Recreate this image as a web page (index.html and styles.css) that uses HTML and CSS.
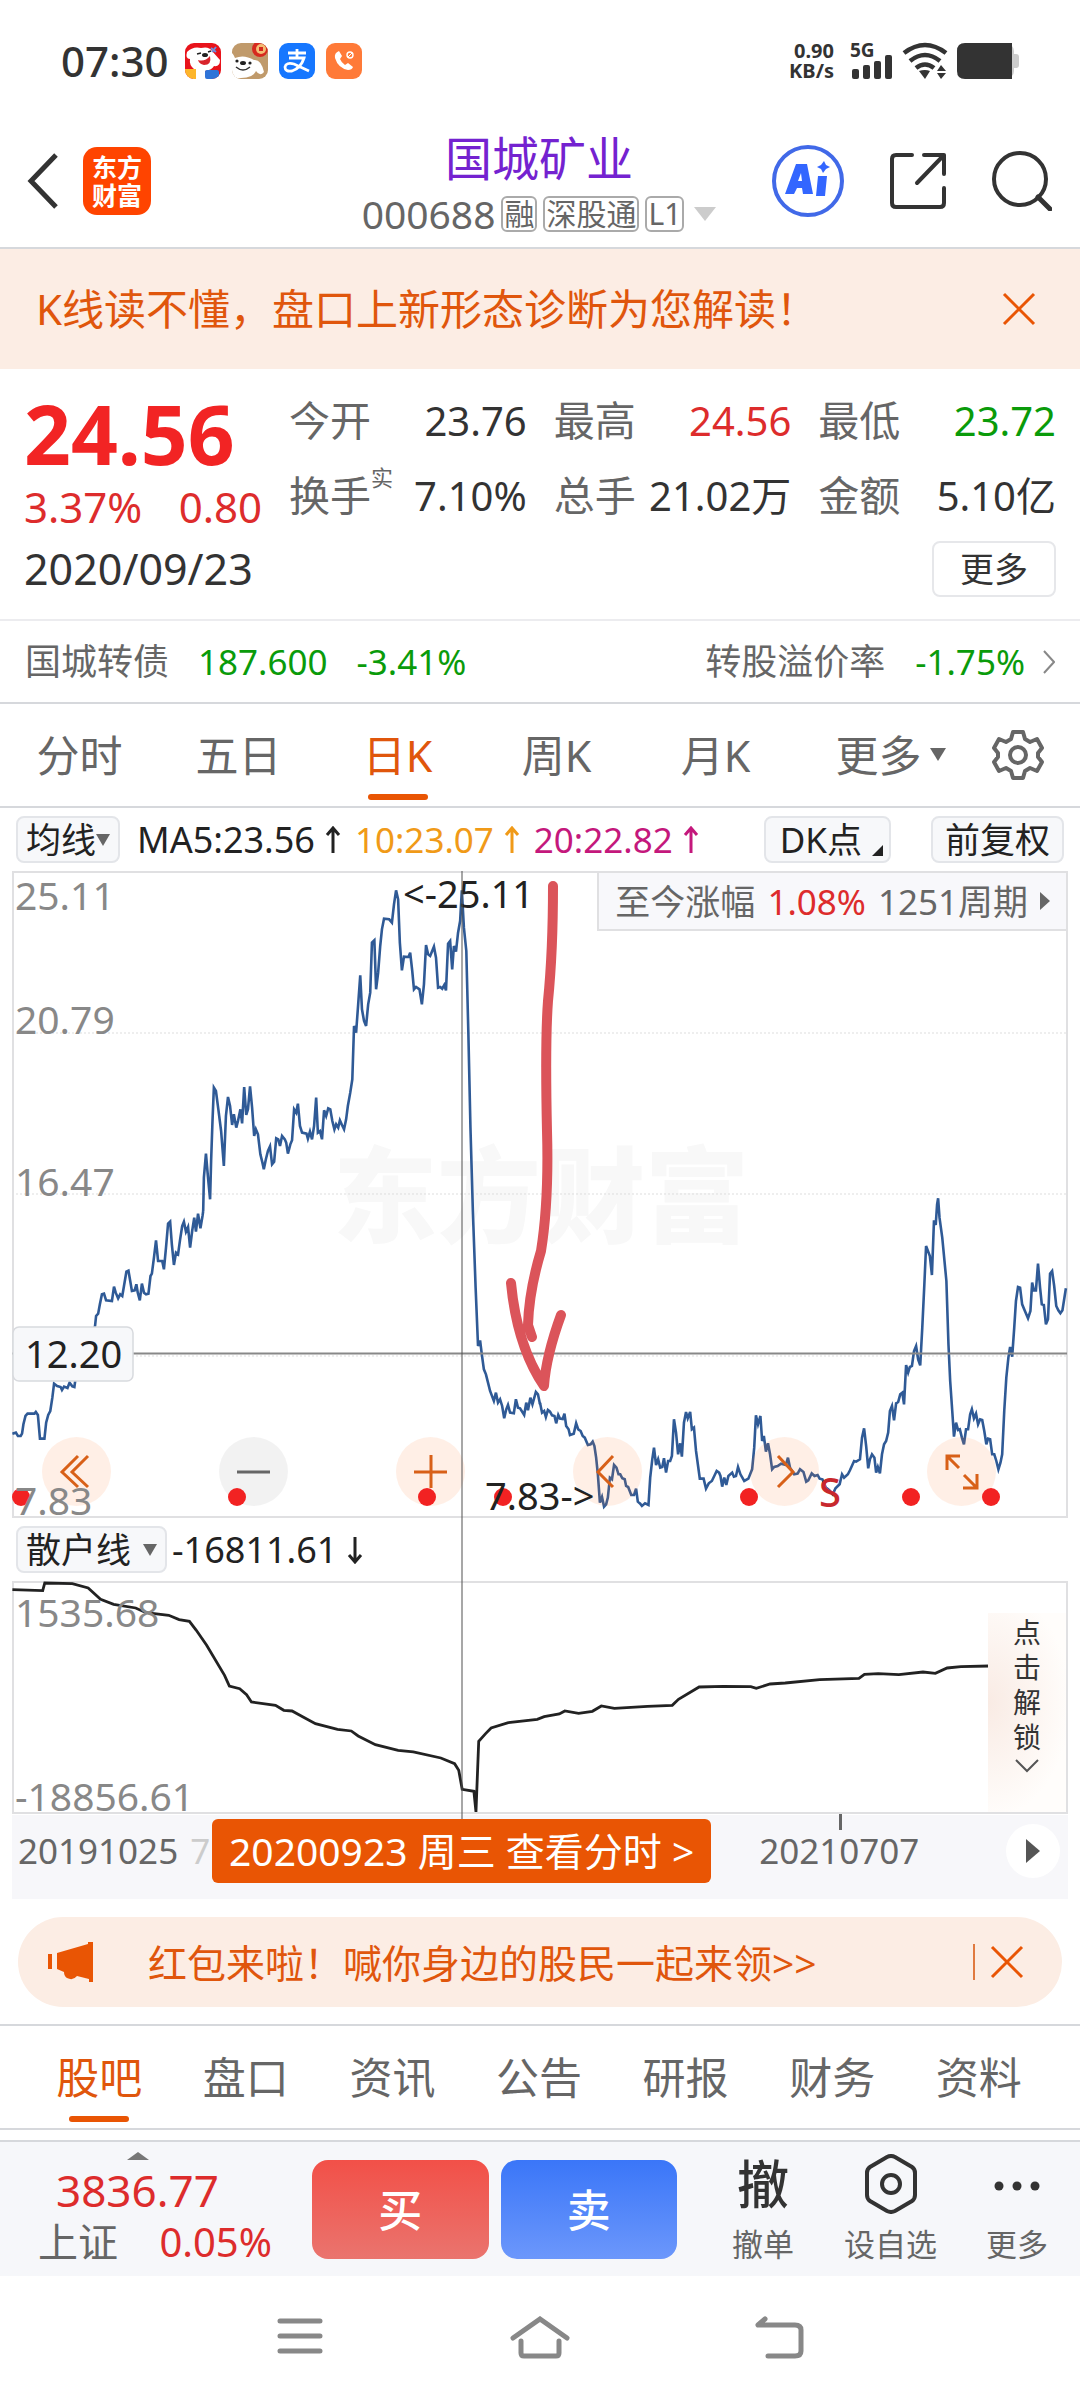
FILE: index.html
```html
<!DOCTYPE html>
<html lang="zh-CN">
<head>
<meta charset="utf-8">
<meta name="viewport" content="width=device-width, initial-scale=1">
<title>国城矿业 000688</title>
<link rel="stylesheet" href="styles.css">
</head>
<body>
<div class="statusbar">
  <span class="clock">07:30</span>
  <div class="apps">
    <svg width="36" height="36" viewBox="0 0 36 36"><defs><clipPath id="app"><rect width="36" height="36" rx="9"/></clipPath></defs><g clip-path="url(#app)"><rect width="36" height="36" fill="#e8131b"/><path d="M2 9Q8 3 16 5Q24 3 27 8L35 17Q35 24 29 23Q27 27 20 28L22 36H8L9 26Q4 22 5 16Q0 16 2 9Z" fill="#fff"/><path d="M13 17Q20 19 25 13Q27 22 19 22Q14 21 13 17Z" fill="#d8232b"/><ellipse cx="20" cy="12" rx="3" ry="2" fill="#222"/><path d="M12 11L16 10M23 9L26 8" stroke="#222" stroke-width="1.5"/><rect y="26" width="11" height="10" fill="#fdb62b"/><rect x="20" y="27" width="14" height="9" rx="2" fill="#2f74d8"/><path d="M26 5L31 9M31 4L27 9" stroke="#6d8fe0" stroke-width="2"/></g></svg>
    <svg width="36" height="36" viewBox="0 0 36 36"><g clip-path="url(#app)"><rect width="36" height="36" fill="#c09a6b"/><path d="M0 10Q2 12 3 15Q12 11 22 17Q29 16 32 29Q28 34 24 28Q21 35 9 35H0Z" fill="#fff"/><circle cx="28" cy="6" r="8" fill="#d6291e"/><circle cx="29" cy="6" r="5" fill="#f3bd74"/><rect x="27" y="4" width="4" height="4" fill="#d6291e"/><ellipse cx="11" cy="20" rx="3" ry="2" fill="#222"/><circle cx="5" cy="18" r="1.6" fill="#222"/><circle cx="18" cy="20" r="1.6" fill="#222"/><path d="M4 24Q11 30 18 24" fill="none" stroke="#333" stroke-width="1.4"/></g></svg>
    <svg width="36" height="36" viewBox="0 0 36 36"><rect width="36" height="36" rx="9" fill="#1677ff"/><path d="M9 10H27M18 6V15M10 15H25Q22 25 13 28Q6 29 6 24Q7 19 15 21L30 28" fill="none" stroke="#fff" stroke-width="2.8"/></svg>
    <svg width="36" height="36" viewBox="0 0 36 36"><rect width="36" height="36" rx="9" fill="#ff7a38"/><path d="M13 8Q8 10 9 15Q12 25 22 27Q26 27 27 24L22 20L19 22Q15 19 14 16L16 13Z" fill="#fff"/><circle cx="24" cy="12" r="3" fill="none" stroke="#fff" stroke-width="1.4"/><path d="M22 14L26 10" stroke="#fff"/></svg>
  </div>
  <div class="rate"><span>0.90</span><span>KB/s</span></div>
  <svg class="signals" width="172" height="36" viewBox="0 0 172 36">
    <text class="net" x="0" y="14">5G</text>
    <g fill="#333"><rect x="2" y="26" width="7" height="10" rx="2"/><rect x="13" y="22" width="7" height="14" rx="2"/><rect x="24" y="18" width="7" height="18" rx="2"/><rect x="35" y="12" width="7" height="24" rx="2"/>
    <path d="M69 28Q75 26 80 28L75 36ZM91 22L96 28H87ZM91 36L96 30H87Z"/></g>
    <g fill="none" stroke="#333" stroke-width="4.5"><path d="M54 10Q75-6 96 10M60 18Q75 6 90 18M66 25Q75 18 84 25"/></g>
    <rect x="150" y="1" width="14" height="34" rx="7" fill="#ccc"/><rect x="160" y="11" width="9" height="14" rx="3" fill="#ccc"/><path d="M115 0H162V36H115Q107 36 107 28V8Q107 0 115 0Z" fill="#333"/>
  </svg>
</div>

<header class="header">
  <div class="header-left">
    <button class="icon" aria-label="返回"><svg width="32" height="56" viewBox="0 0 32 56"><path d="M30 2L5 28L30 54" fill="none" stroke="#333" stroke-width="5"/></svg></button>
    <a class="logo" href="#"><span>东方</span><span>财富</span></a>
  </div>
  <div class="title">
    <h1>国城矿业</h1>
    <div class="codes"><span class="code">000688</span><span class="tag">融</span><span class="tag">深股通</span><span class="tag">L1</span><svg width="22" height="14" viewBox="0 0 22 14"><path d="M0 0H22L11 14Z" fill="#ccc"/></svg></div>
  </div>
  <div class="header-right">
    <button class="icon" aria-label="AI"><svg width="72" height="72" viewBox="0 0 72 72"><circle cx="36" cy="36" r="34" fill="none" stroke="#4169e8" stroke-width="4"/><path d="M24 19H35L41 49H31L30 43H25L22 49H13ZM29 28L26 36H30ZM46 31H55L53 51H44ZM52 16L54 20L58 22L54 24L51 28L49 24L45 22L49 20Z" fill="#3366ff" fill-rule="evenodd"/></svg></button>
    <button class="icon" aria-label="分享"><svg width="60" height="60" viewBox="0 0 60 60"><path d="M24 4H8Q4 4 4 8V52Q4 56 8 56H52Q56 56 56 52V37M36 4H56V23M56 4L29 32" fill="none" stroke="#333" stroke-width="4" stroke-linecap="round" stroke-linejoin="round"/></svg></button>
    <button class="icon" aria-label="搜索"><svg width="60" height="60" viewBox="0 0 60 60"><circle cx="28" cy="28" r="26" fill="none" stroke="#333" stroke-width="4"/><path d="M46 46L58 58" stroke="#333" stroke-width="5" stroke-linecap="round"/></svg></button>
  </div>
</header>

<div class="notice"><a href="#">K线读不懂，盘口上新形态诊断为您解读！</a><button class="icon" aria-label="关闭"><svg width="34" height="34" viewBox="0 0 34 34"><path d="M2 2L32 32M32 2L2 32" stroke="#e95504" stroke-width="3"/></svg></button></div>

<section class="quote">
  <div class="last">
    <strong>24.56</strong>
    <div class="change"><span>3.37%</span><span>0.80</span></div>
    <time>2020/09/23</time>
  </div>
  <div class="stats">
    <dl>
      <div><dt>今开</dt><dd>23.76</dd></div>
      <div><dt>最高</dt><dd class="up">24.56</dd></div>
      <div><dt>最低</dt><dd class="down">23.72</dd></div>
      <div><dt>换手<sup>实</sup></dt><dd>7.10%</dd></div>
      <div><dt>总手</dt><dd>21.02万</dd></div>
      <div><dt>金额</dt><dd>5.10亿</dd></div>
    </dl>
    <button class="more">更多</button>
  </div>
</section>

<a class="bond" href="#">
  <span>国城转债</span><span class="down">187.600</span><span class="down">-3.41%</span>
  <span class="premium">转股溢价率</span><span class="down rate-value">-1.75%</span>
  <svg width="12" height="24" viewBox="0 0 12 24"><path d="M1 1L11 12L1 23" fill="none" stroke="#888" stroke-width="2"/></svg>
</a>

<nav class="periods">
  <a href="#">分时</a><a href="#">五日</a><a class="active" href="#">日K</a><a href="#">周K</a><a href="#">月K</a>
  <a class="others" href="#">更多<svg width="16" height="14" viewBox="0 0 16 14"><path d="M0 0H16L8 13Z" fill="#666"/></svg></a>
  <button class="icon gear" aria-label="设置"><svg width="52" height="52" viewBox="0 0 52 52"><path d="M21 3H31L33 10L38 13L45 10L50 19L46 24V28L50 33L45 42L38 39L33 42L31 49H21L19 42L14 39L7 42L2 33L6 28V24L2 19L7 10L14 13L19 10Z" fill="none" stroke="#666" stroke-width="4" stroke-linejoin="round"/><circle cx="26" cy="26" r="8" fill="none" stroke="#666" stroke-width="4"/></svg></button>
</nav>

<section class="chart">
  <div class="legend">
    <button class="chip">均线<svg width="14" height="12" viewBox="0 0 14 12"><path d="M0 0H14L7 12Z" fill="#666"/></svg></button>
    <span class="ma">MA5:23.56<svg width="16" height="28" viewBox="0 0 16 28"><path d="M8 27V3M2 9L8 2L14 9"/></svg></span>
    <span class="ma ma10">10:23.07<svg width="16" height="28" viewBox="0 0 16 28"><path d="M8 27V3M2 9L8 2L14 9"/></svg></span>
    <span class="ma ma20">20:22.82<svg width="16" height="28" viewBox="0 0 16 28"><path d="M8 27V3M2 9L8 2L14 9"/></svg></span>
    <button class="chip dk">DK点<svg width="11" height="11" viewBox="0 0 11 11"><path d="M11 0V11H0Z" fill="#222"/></svg></button>
    <button class="chip adjust">前复权</button>
  </div>

  <div class="price">
    <svg class="plot" viewBox="12 870 1056 647">
      <text class="watermark" x="541" y="1234">东方财富</text>
      <g class="grid"><path d="M12 1032H1067M12 1193H1067M12 1355H1067"/></g>
      <rect class="frame" x="13" y="871" width="1054" height="645"/>
      <g class="series">
        <g transform="translate(0 860) scale(.3444 .3333)">
          <path d="M590 1050L592 950L598 878L604 950L610 1015L613 900L617 780L621 680L627 690L634 745L642 810L650 915L656 765L662 708L668 735L674 792L679 760L686 800L691 780L698 745L703 787L709 678L715 762L720 745L726 676L732 740L738 825L743 805L749 820L756 880L762 905L766 925L772 895L778 870L784 856L790 910L796 902L802 832L808 835L813 855L819 825L827 835L831 845L836 878L843 850L848 838L854 745L860 755L865 728L871 795L877 815L890 818L894 833L900 812L906 835L912 795L918 710L923 815L929 810L935 835L941 748L947 765L953 742L959 745L965 780L971 805L976 790L982 800L987 778L993 792L999 805L1005 775L1010 735L1017 695L1023 655L1028 495L1034 515L1040 430L1046 343L1051 445L1057 480L1063 495L1069 430L1075 395L1080 245L1087 238L1092 385L1098 335L1104 255L1109 205L1115 173L1130 175L1138 185L1144 130L1150 88L1156 115L1161 245L1167 328L1173 287L1186 288L1191 275L1197 330L1202 385L1208 378L1218 385L1225 430L1231 370L1237 252L1243 280L1249 285L1260 257L1266 290L1272 380L1278 378L1284 383L1290 372L1295 388L1301 248L1307 240L1313 325L1318 255L1324 272L1330 215L1336 180L1341 88L1347 200L1354 270L1360 520L1366 800L1373 1050"/>
        </g>
        <g transform="translate(0 1210) scale(.3444 .3333)">
          <path d="M36 668L46 665L52 675L60 675L64 668L68 640L74 615L80 608L100 608L104 603L110 612L116 683L129 683L134 635L140 612L146 600L152 560L157 518L166 525L176 528L180 537L186 527L196 531L202 515L210 526L216 528L219 505L276 345L279 315L285 308L290 280L296 250L302 248L308 268L325 270L331 227L336 245L343 262L349 250L355 255L360 225L367 182L373 179L379 215L383 240L391 238L396 220L400 245L406 268L412 218L418 245L424 250L431 248L437 195L441 188L447 140L453 88L459 150L471 150L476 175L482 110L488 38L494 32L499 100L505 162L511 125L517 130L523 85L529 45L534 32L540 62L546 48L552 110L558 60L564 20L569 62L575 8L582 52L588 15L590 0"/>
          <path d="M1373 0L1381 230L1388 405L1394 388L1399 430L1405 475L1411 490L1417 515L1423 540L1434 570L1440 545L1446 575L1452 565L1458 585L1464 622L1470 595L1475 582L1481 605L1492 607L1498 565L1504 590L1510 592L1522 612L1528 575L1533 598L1540 560L1546 580L1556 543L1562 550L1568 580"/>
        </g>
        <g transform="translate(540 1210) scale(.3444 .3333)">
          <path d="M0 575L6 605L12 600L17 618L23 597L29 602L35 613L42 615L47 637L53 612L58 623L66 624L71 608L76 645L83 655L87 672L98 668L105 637L111 655L118 660L124 675L130 680L139 702L147 700L153 692L158 705L163 740L168 790L174 875L180 858L186 887L192 880L197 860L203 800L209 805L215 762L222 770L228 790L233 790L239 802L246 805L250 825L256 828L265 852L273 852L279 833L284 872L291 878L296 885L305 877L315 882L320 800L326 745L331 710L337 762L343 745L349 770L355 768L360 742L366 785L372 750L378 750L383 735L389 625L395 665L401 730L407 697L412 737L418 635L424 603L429 622L436 603L441 655L447 650L453 720L459 765L464 803L475 803L482 833L490 817L499 810L506 795L513 780L520 785L524 795L529 827L535 800L541 822L547 795L558 785L563 797L569 795L575 768L582 790L593 810L605 803L616 775L622 710L627 613L633 640L640 615L645 690L650 675L656 722L662 697L668 730L674 775L680 768L690 765L700 758L714 762L720 740L726 770L738 790L748 788L755 775L765 783L773 812L779 808L789 787L797 795L806 792L812 803L820 805L830 830L840 838L850 850L858 832L870 820L877 790L883 800L894 790L900 778L912 750L918 752L929 745L935 680L941 652L947 705L953 772L958 745L964 730L971 740L976 785L981 768L987 787L993 730L999 700L1005 690L1011 665L1016 600L1022 585L1028 628L1034 577L1040 573L1046 550L1052 545L1057 580L1063 462L1069 485L1074 468L1080 465L1086 420L1092 405L1098 445L1104 463L1110 350L1116 220L1121 105L1132 135L1138 192L1144 28L1149 42L1153 -20L1156 -38L1160 20L1168 80L1180 210L1186 400L1191 510L1197 600L1202 677L1208 635L1214 657L1219 655L1225 680L1231 700L1237 655L1243 655L1249 610L1254 595L1260 622L1266 608L1272 640L1278 625L1284 627L1290 660L1296 700L1301 683L1307 685L1313 730L1319 730L1325 750L1331 775L1337 755L1342 730L1348 600L1354 500L1360 440L1365 408L1371 437L1377 350L1382 270L1388 228L1394 230L1400 280L1408 300L1417 322L1424 300L1429 215L1434 238L1440 238L1446 158L1452 230L1457 280L1463 282L1469 340L1475 325L1481 188L1487 180L1493 225L1499 285L1505 298L1511 307L1517 298L1527 232"/>
        </g>
      </g>
      <path d="M12 1352.5H1067" stroke="#888" stroke-width="2"/>
      <rect x="13" y="1326" width="120" height="54" rx="6" fill="#f7f8fa" stroke="#d8dade" stroke-width="1.5"/>
    </svg>
    <div class="controls">
      <button class="round" aria-label="最早"><svg width="69" height="69" viewBox="0 0 69 69"><path d="M36 19L20 35L36 50M46 19L30 35L46 50"/></svg></button>
      <button class="round off" aria-label="缩小"><svg width="69" height="69" viewBox="0 0 69 69"><path d="M18 35H51"/></svg></button>
      <button class="round" aria-label="放大"><svg width="69" height="69" viewBox="0 0 69 69"><path d="M18 35H51M35 18V51"/></svg></button>
      <button class="round" aria-label="左移"><svg width="69" height="69" viewBox="0 0 69 69"><path d="M40 19L25 35L40 50"/></svg></button>
      <button class="round" aria-label="右移"><svg width="69" height="69" viewBox="0 0 69 69"><path d="M28 19L43 35L28 50"/></svg></button>
      <button class="round" aria-label="全屏"><svg width="69" height="69" viewBox="0 0 69 69"><path d="M33 19H20V33M20 19L32 31M50 37V51H36M50 51L37 38"/></svg></button>
    </div>
    <svg class="plot marks" viewBox="12 870 1056 647">
      <g fill="#f22222"><circle cx="21" cy="1496" r="9"/><circle cx="237" cy="1496" r="9"/><circle cx="427" cy="1496" r="9"/><circle cx="503" cy="1496" r="9"/><circle cx="749" cy="1496" r="9"/><circle cx="911" cy="1496" r="9"/><circle cx="991" cy="1496" r="9"/></g>
      <g class="axis"><text x="15" y="909">25.11</text><text x="15" y="1033">20.79</text><text x="15" y="1195">16.47</text><text x="15" y="1514">7.83</text></g>
      <g class="value"><text x="25" y="1367">12.20</text><text x="403" y="907">&lt;-25.11</text><text x="485" y="1509">7.83-&gt;</text></g>
      <text class="sell-mark" x="819" y="1506">S</text>
      <path class="pen" d="M553 885Q553 950 548 1000Q545 1040 547 1130Q549 1200 541 1250Q529 1290 528 1324L532 1336M511 1282Q517 1345 544 1385Q546 1355 561 1314"/>
    </svg>
    <button class="since"><span>至今涨幅</span><b>1.08%</b><span>1251周期</span><svg width="10" height="18" viewBox="0 0 10 18"><path d="M0 0L10 9L0 18Z" fill="#666"/></svg></button>
  </div>

  <div class="legend legend-sub">
    <button class="chip wide">散户线<svg width="14" height="12" viewBox="0 0 14 12"><path d="M0 0H14L7 12Z" fill="#666"/></svg></button>
    <span class="ma">-16811.61<svg width="16" height="28" viewBox="0 0 16 28"><path d="M8 1V25M2 19L8 26L14 19"/></svg></span>
  </div>

  <div class="retail">
    <svg class="plot" viewBox="12 1579 1056 233">
      <rect class="frame" x="13" y="1580" width="1054" height="231"/>
      <g class="series dark" transform="translate(0 1510) scale(.6888 .3333)"><path d="M18 233L62 236L65 213L105 215L128 228L146 262L165 277L197 288L212 302L245 310L260 323L275 328L285 355L300 400L326 490L333 522L348 530L358 548L365 570L400 580L412 595L424 597L442 617L458 635L490 652L510 657L520 672L545 698L578 715L600 720L640 738L660 755L666 775L671 832L688 838L691 900L695 688L705 665L713 648L738 632L780 622L790 614L812 606L820 597L840 604L860 598L873 582L892 589L940 583L976 580L985 562L1015 525L1050 523L1090 524L1098 529L1118 516L1140 513L1190 503L1247 499L1255 487L1275 485L1305 488L1340 480L1358 484L1375 468L1395 464L1436 462"/></g>
      <g class="axis"><text x="15" y="1625">1535.68</text><text x="15" y="1809">-18856.61</text></g>
    </svg>
    <button class="unlock"><span>点击解锁</span><svg width="24" height="14" viewBox="0 0 24 14"><path d="M1 1L12 12L23 1" fill="none" stroke="#555" stroke-width="2"/></svg></button>
  </div>

  <div class="dates">
    <span>20191025</span><span class="ghost">7</span>
    <button class="day">20200923 周三 查看分时 &gt;</button>
    <span class="date-tick">20210707</span>
    <button class="play" aria-label="播放"><svg width="14" height="24" viewBox="0 0 14 24"><path d="M0 0L14 12L0 24Z" fill="#555"/></svg></button>
  </div>
  <div class="crosshair"></div>
</section>

<div class="promo">
  <svg width="46" height="40" viewBox="0 0 46 40"><path d="M0 12H4V27H0ZM9 11L40 2V0H45V40H41V37L29 34Q25 39 19 36Q16 34 16 30L9 27Z" fill="#e95504"/></svg>
  <a href="#">红包来啦！喊你身边的股民一起来领&gt;&gt;</a>
  <button class="icon" aria-label="关闭"><svg width="34" height="34" viewBox="0 0 34 34"><path d="M2 2L32 32M32 2L2 32" stroke="#e95504" stroke-width="3"/></svg></button>
</div>

<nav class="sections"><a class="active" href="#">股吧</a><a href="#">盘口</a><a href="#">资讯</a><a href="#">公告</a><a href="#">研报</a><a href="#">财务</a><a href="#">资料</a></nav>

<footer class="trade">
  <a class="index" href="#">
    <svg width="22" height="8" viewBox="0 0 22 8"><path d="M0 8L11 0L22 8Z" fill="#777"/></svg>
    <span class="points">3836.77</span>
    <span class="pct"><span>上证</span><span class="up">0.05%</span></span>
  </a>
  <button class="order buy">买</button>
  <button class="order sell">卖</button>
  <button class="tool"><span class="glyph">撤</span><span>撤单</span></button>
  <button class="tool middle"><svg width="54" height="60" viewBox="0 0 54 60"><path d="M23 3Q27 1 31 3L48 13Q51 15 51 19V41Q51 45 48 47L31 57Q27 59 23 57L6 47Q3 45 3 41V19Q3 15 6 13Z" fill="none" stroke="#333" stroke-width="4"/><circle cx="27" cy="30" r="9" fill="none" stroke="#333" stroke-width="4"/></svg><span>设自选</span></button>
  <button class="tool"><svg width="46" height="60" viewBox="0 0 46 60"><g fill="#333"><circle cx="5" cy="32" r="4.5"/><circle cx="23" cy="32" r="4.5"/><circle cx="41" cy="32" r="4.5"/></g></svg><span>更多</span></button>
</footer>

<nav class="system">
  <button class="icon" aria-label="最近任务"><svg width="60" height="44" viewBox="0 0 60 44"><path d="M10 5H50M10 20H50M10 35H50" stroke="#888" stroke-width="5" stroke-linecap="round"/></svg></button>
  <button class="icon" aria-label="主屏幕"><svg width="60" height="44" viewBox="0 0 60 44"><path d="M3 22L30 3L57 22M11 25V37Q11 40 14 40H46Q49 40 49 37V25" fill="none" stroke="#888" stroke-width="5" stroke-linecap="round"/></svg></button>
  <button class="icon" aria-label="返回"><svg width="60" height="44" viewBox="0 0 60 44"><path d="M15 3L8 9H45Q51 9 51 14V35Q51 40 45 40H18" fill="none" stroke="#888" stroke-width="5" stroke-linecap="round" stroke-linejoin="round"/></svg></button>
</nav>
</body>
</html>
```
FILE: styles.css
```css
* { box-sizing: border-box; }

body {
  margin: 0;
  background: #fff;
  color: #333;
  font-family: "Noto Sans", "Noto Sans CJK SC", sans-serif;
  font-size: 36px;
  line-height: 1;
}

svg { display: block; flex: none; }
a { color: inherit; text-decoration: none; }
button {
  margin: 0;
  padding: 0;
  border: 0;
  background: none;
  color: inherit;
  font: inherit;
  line-height: 1;
}
.icon { display: flex; flex: none; }
.up { color: #dd2c2c; }
.down { color: #0a9b0a; }

/* system status bar */
.statusbar {
  display: flex;
  align-items: center;
  height: 122px;
  padding: 0 58px 0 61px;
}
.clock { font-size: 42px; font-weight: 500; }
.apps { display: flex; gap: 11px; margin-left: 16px; }
.rate {
  display: flex;
  flex-direction: column;
  align-items: flex-end;
  margin-left: auto;
  margin-right: 16px;
  font-size: 20px;
  font-weight: 700;
}
.signals, .plot { overflow: visible; }
.net { font-size: 19px; font-weight: 700; fill: #333; }

/* header */
.header {
  display: grid;
  grid-template-columns: 1fr auto 1fr;
  align-items: center;
  height: 127px;
  padding: 0 28px 7px 26px;
  border-bottom: 2px solid #d6d8dc;
}
.header-left { display: flex; align-items: center; gap: 25px; }
.header-right { display: flex; align-items: center; justify-content: flex-end; gap: 44px; }
.logo {
  display: flex;
  flex-direction: column;
  align-items: center;
  justify-content: center;
  width: 68px;
  height: 68px;
  border-radius: 14px;
  background: #ff4400;
  color: #fff;
  font-size: 25px;
  font-weight: 700;
  line-height: 28px;
}
.title { display: flex; flex-direction: column; align-items: center; gap: 14px; padding-top: 4px; }
.title h1 { margin: 0; color: #7422d0; font-size: 47px; font-weight: 400; line-height: 48px; }
.codes { display: flex; align-items: center; gap: 6px; color: #666; }
.code { font-size: 39px; line-height: 36px; }
.tag {
  height: 36px;
  padding: 0 1px;
  border: 2px solid #aaa;
  border-radius: 6px;
  font-size: 30px;
  line-height: 32px;
}
.codes svg { margin-left: 4px; }

.notice {
  display: flex;
  align-items: center;
  justify-content: space-between;
  height: 120px;
  padding: 0 44px 0 36px;
  background: #fcede4;
  color: #e0560c;
  font-size: 42px;
}

/* quote */
.quote {
  display: flex;
  gap: 24px;
  padding: 22px 24px 20px;
  border-bottom: 2px solid #ececef;
}
.last { width: 241px; padding-right: 3px; }
.last strong { display: block; color: #f22424; font-size: 82px; line-height: 84px; }
.change {
  display: flex;
  justify-content: space-between;
  color: #dd2c2c;
  font-size: 42px;
  line-height: 64px;
}
.last time { display: block; font-size: 43px; line-height: 60px; }
.stats { flex: 1; display: flex; flex-direction: column; align-items: flex-end; }
.stats dl {
  display: grid;
  grid-template-columns: repeat(3, 1fr);
  column-gap: 27px;
  width: 100%;
  margin: 0;
}
.stats dl div { display: flex; justify-content: space-between; height: 75px; line-height: 59px; }
.stats dt { position: relative; color: #666; font-size: 41px; }
.stats dd { margin: 0; font-size: 40px; white-space: nowrap; }
.stats sup { position: absolute; left: 100%; top: 0; font-size: 22px; line-height: 22px; }
.more {
  width: 124px;
  height: 56px;
  border: 2px solid #e6e7ea;
  border-radius: 8px;
  font-size: 34px;
}

.bond {
  display: flex;
  align-items: center;
  height: 83px;
  padding: 0 25px;
  border-bottom: 2px solid #d6d8dc;
  color: #666;
  font-size: 36px;
}
.bond .down { margin-left: 29px; font-size: 35px; }
.bond .premium { margin-left: auto; }
.bond .rate-value { margin-left: 30px; margin-right: 18px; }

/* tabs */
.periods, .sections { display: flex; height: 104px; color: #666; font-size: 43px; border-bottom: 2px solid #d6d8dc; }
.periods a, .sections a {
  flex: 1;
  display: flex;
  align-items: center;
  justify-content: center;
  gap: 10px;
  position: relative;
}
.periods .others { gap: 8px; padding-left: 16px; }
.periods .gear { width: 96px; margin-right: 14px; align-items: center; justify-content: center; }
.active { color: #e0560c; }
.active::after {
  content: "";
  position: absolute;
  bottom: 6px;
  width: 60px;
  height: 6px;
  border-radius: 3px;
  background: #e95504;
}

/* chart */
.chart { position: relative; padding: 0 12px; }
.legend { display: flex; align-items: center; height: 63px; padding: 0 4px; color: #222; }
.chip {
  display: flex;
  align-items: center;
  justify-content: center;
  height: 47px;
  padding: 0 8px;
  border: 2px solid #e3e5e9;
  border-radius: 8px;
  background: #f7f8fa;
  font-size: 35px;
}
.ma { display: flex; align-items: center; gap: 10px; margin-left: 14px; }
.ma:nth-child(2) { margin-left: 17px; }
.ma svg { fill: none; stroke: currentColor; stroke-width: 3; }
.ma10 { color: #f09a18; font-size: 35px; }
.ma20 { color: #c4187c; font-size: 35px; }
.dk { margin-left: auto; padding: 0 6px 0 14px; gap: 10px; }
.dk svg { margin-top: 22px; }
.adjust { margin-left: 40px; padding: 0 12px; }
.legend-sub .ma:nth-child(2) { margin-left: 5px; }
.wide { gap: 12px; }

.price, .retail { position: relative; }
.plot { width: 100%; height: auto; }
.marks { position: absolute; left: 0; top: 0; pointer-events: none; }
.frame { fill: none; stroke: #e0e0e2; stroke-width: 2; }
.grid path { stroke: #ddd; stroke-width: 1; stroke-dasharray: 2 2; }
.series path { fill: none; stroke: #2f5a96; stroke-width: 2.6; vector-effect: non-scaling-stroke; }
.series.dark path { stroke: #222; stroke-width: 2.8; }
.watermark { font-family: "Noto Sans CJK SC", sans-serif; font-size: 104px; font-weight: 900; fill: #f8f8f8; text-anchor: middle; }
.axis { font-size: 39px; fill: #888; }
.value { font-size: 38px; fill: #222; }
.sell-mark { font-size: 40px; font-weight: 500; fill: #c8282d; }
.pen { fill: none; stroke: #db545a; stroke-width: 10; stroke-linecap: round; stroke-linejoin: round; }
.controls {
  position: absolute;
  left: 30px;
  right: 72px;
  bottom: 12px;
  display: flex;
  justify-content: space-between;
}
.round { width: 69px; height: 69px; border-radius: 50%; background: rgba(255, 120, 50, 0.12); }
.round svg { fill: none; stroke: #d86018; stroke-width: 3; }
.off { background: rgba(0, 0, 0, 0.05); }
.off svg { stroke: #666; }
.since {
  position: absolute;
  top: 0;
  right: 0;
  display: flex;
  align-items: center;
  gap: 12px;
  height: 60px;
  padding: 0 16px;
  border: 2px solid #e0e0e2;
  background: #f8f8fb;
  color: #666;
  font-size: 35px;
}
.since b { color: #dd2c2c; font-weight: 400; }
.unlock {
  position: absolute;
  right: 2px;
  top: 32px;
  bottom: 2px;
  display: flex;
  flex-direction: column;
  align-items: center;
  gap: 4px;
  width: 78px;
  padding-top: 2px;
  background: radial-gradient(ellipse at 0 45%, #f9ebe4, #fffdfb 75%);
  color: #333;
}
.unlock span { width: 28px; font-size: 28px; line-height: 35px; }

.dates {
  display: flex;
  align-items: center;
  height: 84px;
  margin-top: 1px;
  padding: 0 8px 13px 6px;
  background: #f7f7fa;
  color: #666;
  font-size: 35px;
}
.ghost { width: 34px; padding-right: 2px; color: #ccc; text-align: right; }
.day {
  position: relative;
  z-index: 1;
  height: 64px;
  width: 499px;
  border-radius: 6px;
  background: #e95504;
  color: #fff;
  font-size: 39px;
  white-space: nowrap;
}
.date-tick { margin-left: 48px; position: relative; }
.date-tick::before { content: ""; position: absolute; left: 50%; top: -19px; width: 3px; height: 16px; background: #666; }
.play {
  display: flex;
  align-items: center;
  justify-content: center;
  width: 54px;
  height: 54px;
  margin-left: auto;
  border-radius: 50%;
  background: #fff;
}
.crosshair {
  position: absolute;
  left: 42.7%;
  top: 63px;
  bottom: 80px;
  width: 2px;
  background: rgba(80, 80, 80, 0.5);
}

.promo {
  display: flex;
  align-items: center;
  height: 90px;
  margin: 18px 18px 17px;
  padding: 0 38px 0 30px;
  border-radius: 45px;
  background: #fcede4;
  color: #e0560c;
  font-size: 39px;
}
.promo a { margin-left: 54px; flex: 1; }
.promo .icon { height: 36px; padding-left: 15px; border-left: 2px solid #e07a40; align-items: center; }

.sections { height: 106px; padding: 0 28px 0 26px; border-top: 2px solid #d6d8dc; }

/* trade bar */
.trade {
  display: flex;
  align-items: flex-start;
  height: 136px;
  margin-top: 10px;
  padding: 18px 32px 0 38px;
  border-top: 2px solid #d6d8dc;
  background: #f6f7fa;
  color: #666;
}
.index { display: flex; flex-direction: column; width: 234px; margin-top: -8px; }
.index svg { margin-left: 89px; }
.points { margin-left: 18px; color: #dd2c2c; font-size: 44px; line-height: 60px; }
.pct { display: flex; justify-content: space-between; font-size: 40px; line-height: 44px; }
.order {
  flex: 1;
  height: 99px;
  margin-left: 12px;
  border-radius: 16px;
  color: #fff;
  font-size: 44px;
  font-weight: 500;
}
.index + .order { margin-left: 40px; }
.buy { background: linear-gradient(#f25048, #ea746e); }
.sell { background: linear-gradient(#3a76f8, #6c97fb); }
.tool {
  display: flex;
  flex-direction: column;
  align-items: center;
  justify-content: space-between;
  height: 106px;
  margin-top: -6px;
  font-size: 31px;
}
.glyph { color: #333; font-size: 52px; font-weight: 500; line-height: 60px; }
.order + .tool { margin-left: 55px; }
.middle { margin: -6px 49px 0 50px; }

.system { display: flex; justify-content: center; gap: 180px; padding: 40px 0; }
```
